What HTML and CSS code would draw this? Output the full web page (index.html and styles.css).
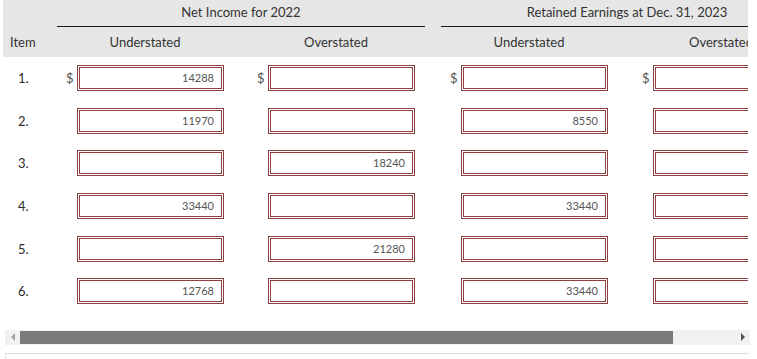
FILE: index.html
```html
<!DOCTYPE html>
<html>
<head>
<meta charset="utf-8">
<link rel="stylesheet" href="styles.css">
</head>
<body>
<div class="page">
  <div class="scroller">
    <div class="table">
      <div class="head">
        <div class="h-empty"></div>
        <div class="group g1">Net Income for 2022</div>
        <div class="h-gap"></div>
        <div class="group g2">Retained Earnings at Dec. 31, 2023</div>
        <div class="h-item">Item</div>
        <div class="h-col">Understated</div>
        <div class="h-col">Overstated</div>
        <div class="h-gap"></div>
        <div class="h-col">Understated</div>
        <div class="h-col">Overstated</div>
      </div>
      <div class="body">
        <div class="item">1.</div>
        <div class="cell"><span class="cur">$</span><span class="box">14288</span></div>
        <div class="cell"><span class="cur">$</span><span class="box"></span></div>
        <div class="gap"></div>
        <div class="cell"><span class="cur">$</span><span class="box"></span></div>
        <div class="cell"><span class="cur">$</span><span class="box"></span></div>

        <div class="item">2.</div>
        <div class="cell"><span class="cur"></span><span class="box">11970</span></div>
        <div class="cell"><span class="cur"></span><span class="box"></span></div>
        <div class="gap"></div>
        <div class="cell"><span class="cur"></span><span class="box">8550</span></div>
        <div class="cell"><span class="cur"></span><span class="box"></span></div>

        <div class="item">3.</div>
        <div class="cell"><span class="cur"></span><span class="box"></span></div>
        <div class="cell"><span class="cur"></span><span class="box">18240</span></div>
        <div class="gap"></div>
        <div class="cell"><span class="cur"></span><span class="box"></span></div>
        <div class="cell"><span class="cur"></span><span class="box"></span></div>

        <div class="item">4.</div>
        <div class="cell"><span class="cur"></span><span class="box">33440</span></div>
        <div class="cell"><span class="cur"></span><span class="box"></span></div>
        <div class="gap"></div>
        <div class="cell"><span class="cur"></span><span class="box">33440</span></div>
        <div class="cell"><span class="cur"></span><span class="box"></span></div>

        <div class="item">5.</div>
        <div class="cell"><span class="cur"></span><span class="box"></span></div>
        <div class="cell"><span class="cur"></span><span class="box">21280</span></div>
        <div class="gap"></div>
        <div class="cell"><span class="cur"></span><span class="box"></span></div>
        <div class="cell"><span class="cur"></span><span class="box"></span></div>

        <div class="item">6.</div>
        <div class="cell"><span class="cur"></span><span class="box">12768</span></div>
        <div class="cell"><span class="cur"></span><span class="box"></span></div>
        <div class="gap"></div>
        <div class="cell"><span class="cur"></span><span class="box">33440</span></div>
        <div class="cell"><span class="cur"></span><span class="box"></span></div>
      </div>
    </div>
  </div>
  <div class="scrollbar">
    <div class="arrow left"></div>
    <div class="track"><div class="thumb"></div></div>
    <div class="arrow right"></div>
  </div>
  <div class="below"></div>
</div>
</body>
</html>
```
FILE: styles.css
```css
html, body {
  margin: 0;
  padding: 0;
  background: #ffffff;
}
body {
  font-family: Lato, "Open Sans", Arial, sans-serif;
  font-size: 13px;
  color: #333333;
}
.page {
  width: 757px;
  height: 359px;
  overflow: hidden;
}
.scroller {
  margin-left: 3px;
  width: 745px;
  overflow: hidden;
}
.table {
  width: 810px;
}
.head {
  display: grid;
  grid-template-columns: 54px 191px 180px 13px 192px 180px;
  grid-template-rows: 28px 29px;
  background: #e6e6e6;
}
.group {
  grid-column: span 2;
  border-bottom: 1px solid #1a1a1a;
  text-align: center;
  line-height: 24px;
  height: 27px;
  box-sizing: border-box;
}
.g1 {
  margin-right: 3px;
}
.h-item {
  padding-left: 7px;
  line-height: 29px;
}
.h-col {
  padding-left: 9px;
  width: 158px;
  text-align: center;
  line-height: 29px;
}
.body {
  display: grid;
  grid-template-columns: 54px 191px 180px 13px 192px 180px;
  grid-auto-rows: 42.6px;
}
.item {
  padding-left: 15px;
  display: flex;
  align-items: center;
  color: #2b2b2b;
}
.cell {
  padding-left: 9px;
  display: flex;
  align-items: center;
}
.cur {
  width: 11px;
  color: #555555;
  font-size: 13px;
}
.box {
  width: 147px;
  height: 26px;
  box-sizing: border-box;
  border: 3px double #8e4040;
  background: #ffffff;
  font-size: 11px;
  color: #555555;
  text-align: right;
  padding-right: 7px;
  line-height: 20px;
  flex: none;
}
.scrollbar {
  margin: 17px 0 0 5px;
  width: 745px;
  height: 15px;
  background: #f1f1f1;
  display: flex;
  align-items: center;
}
.arrow {
  width: 15px;
  height: 15px;
  display: flex;
  align-items: center;
  justify-content: center;
  flex: none;
}
.arrow.left::before {
  content: "";
  border-top: 4px solid transparent;
  border-bottom: 4px solid transparent;
  border-right: 4px solid #a3a3a3;
}
.arrow.right::before {
  content: "";
  border-top: 4px solid transparent;
  border-bottom: 4px solid transparent;
  border-left: 4px solid #505050;
}
.track {
  flex: 1;
  height: 13px;
}
.thumb {
  width: 653px;
  height: 13px;
  background: #7b7b7b;
}
.below {
  margin: 8px 0 0 5px;
  width: 743px;
  height: 20px;
  border-top: 1px solid #dddddd;
  border-left: 1px solid #e4e4e4;
}
```
